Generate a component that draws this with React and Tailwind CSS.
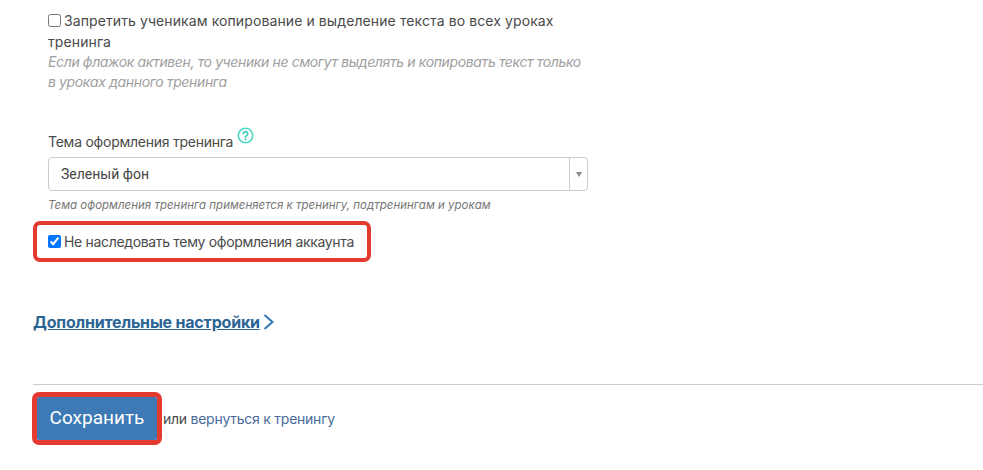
import React from 'react';

const sans = "font-['Inter','Noto_Sans',sans-serif]";

export default function App() {
    return (
        <div className={`w-[983px] h-[470px] overflow-hidden bg-white text-[#4a4a4a] ${sans}`}>
            <div className="pl-[48px] w-[588px] box-content">
                <div className="pt-[10px] w-[540px] text-[14px] leading-[21px]">
                    <label className="block tracking-[0.1px]">
                        <input type="checkbox" className="w-[13px] h-[13px] mr-[3px] align-[-1px]" />
                        Запретить ученикам копирование и выделение текста во всех уроках тренинга
                    </label>
                    <p className="italic text-[#a0a0a0] leading-[20px] tracking-[-0.37px]">
                        Если флажок активен, то ученики не смогут выделять и копировать текст только в уроках данного тренинга
                    </p>
                </div>

                <div className="mt-[35px] flex items-start h-[30px] text-[14px] leading-[20px] tracking-[-0.25px]">
                    <span className="mt-[5px]">Тема оформления тренинга</span>
                    <svg className="ml-[4px]" width="17" height="17" viewBox="0 0 17 17" fill="none">
                        <circle cx="8.5" cy="8.5" r="7.2" stroke="#4fd8c4" strokeWidth="1.6" />
                        <path d="M6.3 6.7a2.2 2.2 0 1 1 3.4 1.9c-.8.5-1.2.9-1.2 1.7" stroke="#3fcfba" strokeWidth="1.7" strokeLinecap="round" />
                        <circle cx="8.5" cy="12.5" r="1" fill="#3fcfba" />
                    </svg>
                </div>

                <div className="flex w-[540px] h-[34px] border border-[#ccc] rounded-[4px] bg-white">
                    <div className="flex-1 pl-[12px] text-[14px] leading-[32px] text-[#444] font-['Roboto',sans-serif]">Зеленый фон</div>
                    <div className="w-[18px] border-l border-[#ccc] flex items-center justify-center">
                        <span className="w-0 h-0 border-x-[3.5px] border-x-transparent border-t-[5px] border-t-[#888]" />
                    </div>
                </div>

                <p className="mt-[6px] text-[11.5px] leading-[16px] italic text-[#777]">
                    Тема оформления тренинга применяется к тренингу, подтренингам и урокам
                </p>
            </div>

            <div className="ml-[33px] mt-[8px] w-[338px] h-[41px] border-[4px] border-[#e53a30] rounded-[7px] pl-[11px] flex items-center text-[14px] tracking-[-0.33px]">
                <input type="checkbox" defaultChecked className="w-[13px] h-[13px] mr-[3px]" />
                <span>Не наследовать тему оформления аккаунта</span>
            </div>

            <div className="ml-[33px] mt-[49px] flex items-center h-[22px] text-[16px] font-bold text-[#2b6494] tracking-[-0.2px]">
                <a className="underline">Дополнительные настройки</a>
                <svg className="ml-[3px]" width="12" height="16" viewBox="0 0 12 16" fill="none">
                    <path d="M1.5 1l8 7-8 7" stroke="#2f78b7" strokeWidth="2" />
                </svg>
            </div>

            <div className="ml-[33px] mt-[51px] border-t border-[#ccc]" />

            <div className="ml-[32px] mt-[7px] flex items-center">
                <div className="w-[130px] h-[53px] border-[5px] border-[#e53a30] rounded-[7px]">
                    <button className="w-full h-full bg-[#3d7ab5] text-white text-[19px] font-['Roboto',sans-serif] rounded-[2px]">Сохранить</button>
                </div>
                <span className="ml-[1px] text-[14px] tracking-[-0.25px]">или <a className="text-[#4a6a9c]">вернуться к тренингу</a></span>
            </div>
        </div>
    );
}
